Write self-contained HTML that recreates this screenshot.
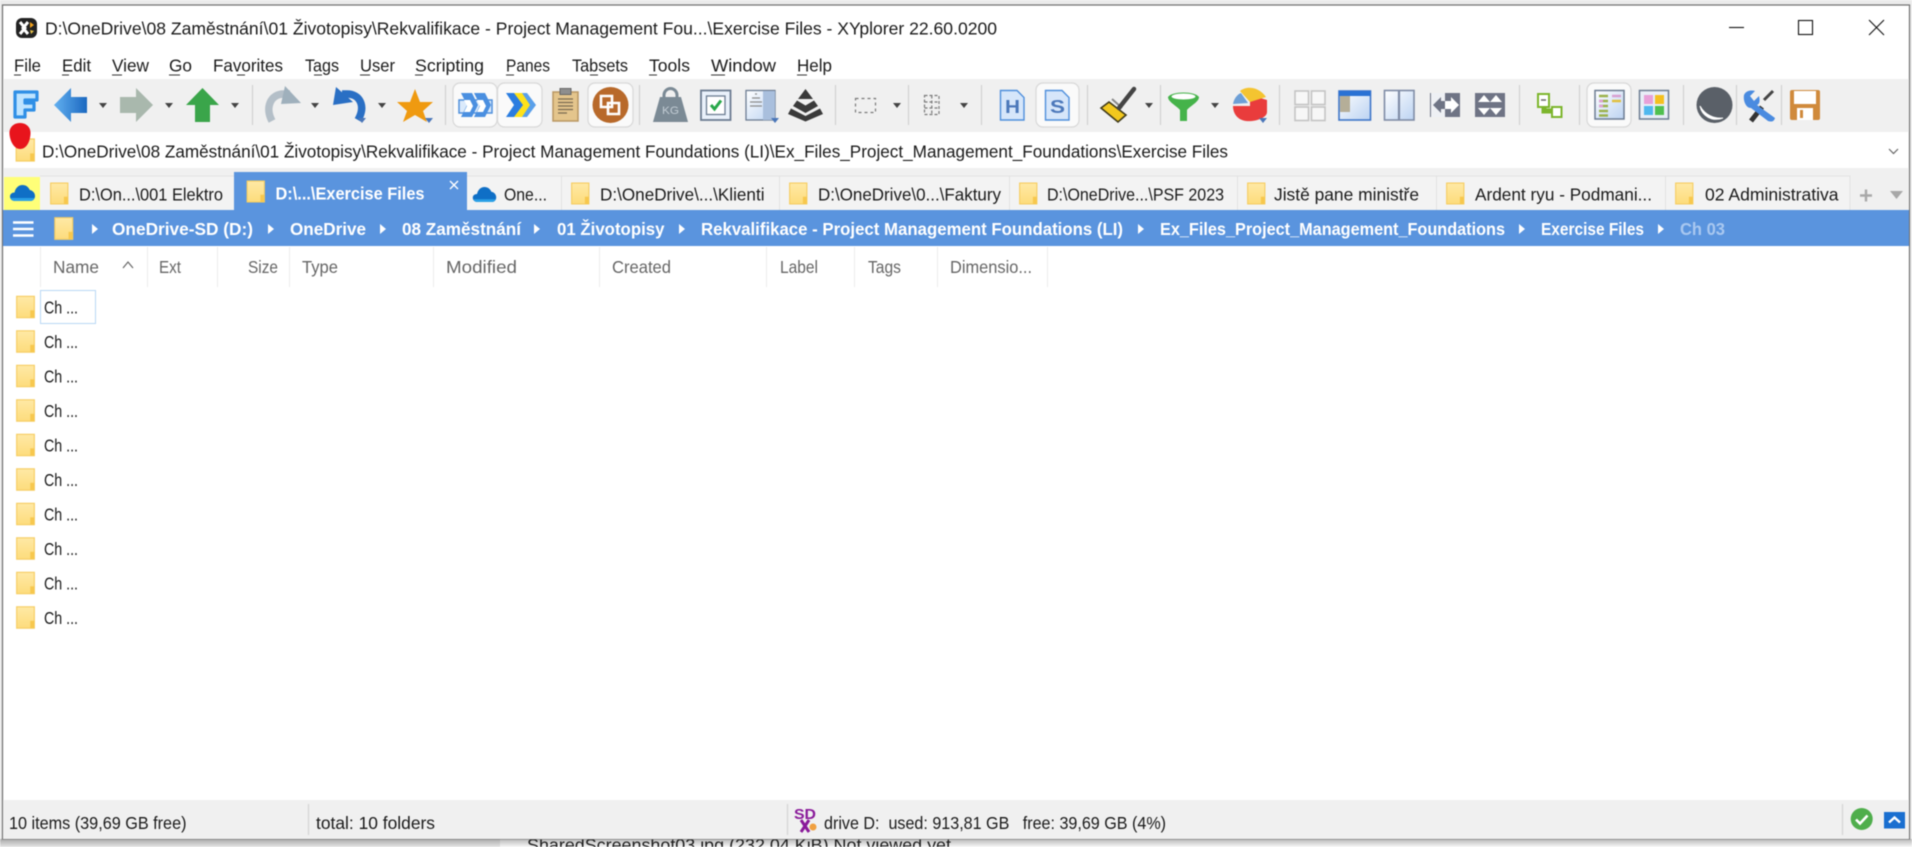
<!DOCTYPE html>
<html>
<head>
<meta charset="utf-8">
<title>XYplorer</title>
<style>
html,body{margin:0;padding:0;width:1912px;height:847px;overflow:hidden;background:#fff}
svg{display:block;filter:blur(0.45px)}
text{font-family:"Liberation Sans","DejaVu Sans",sans-serif;font-size:17.5px;fill:#1a1a1a}
.h{fill:#666}
.b{font-weight:bold;fill:#fff;font-size:17.5px}
</style>
</head>
<body>
<svg width="1912" height="847" viewBox="0 0 1912 847" xmlns="http://www.w3.org/2000/svg">
<defs>
<linearGradient id="fg" x1="0" y1="0" x2="0" y2="1"><stop offset="0" stop-color="#ffe9a6"/><stop offset="1" stop-color="#fddc7c"/></linearGradient>
<linearGradient id="sh" x1="0" y1="0" x2="0" y2="1"><stop offset="0" stop-color="#000" stop-opacity=".28"/><stop offset="1" stop-color="#000" stop-opacity=".03"/></linearGradient>
<linearGradient id="blu" x1="0" y1="0" x2="1" y2="0"><stop offset="0" stop-color="#62b0f0"/><stop offset="1" stop-color="#1b68c0"/></linearGradient>
<linearGradient id="docg" x1="0" y1="0" x2="1" y2="1"><stop offset="0" stop-color="#fff"/><stop offset="1" stop-color="#bcd3f2"/></linearGradient>
<symbol id="folder" viewBox="0 0 20 24" overflow="visible">
<path d="M.7.7H19.3V23.3H.7Z" fill="url(#fg)" stroke="#f6cd62" stroke-width="1.2"/>
<path d="M15 15.5h4.3V23.3H15Z" fill="#f7c84e"/>
</symbol>
<symbol id="cloud" viewBox="0 0 25 16" overflow="visible">
<path d="M5 16C2 16 0 14 0 11.500 0 9 2 7.500 4.500 7.500 5.500 3 8.500 0 12.500 0 16 0 18.500 2 19.800 5 22.800 5.500 25 8 25 11 25 14 23 16 20 16Z" fill="#0f6fc6"/>
<path d="M5 16C2.800 16 1 14.600 .6 13H24.400C23.800 15 22 16 20 16Z" fill="#2aa0e6"/>
</symbol>
<symbol id="tri" viewBox="0 0 8 5" overflow="visible"><path d="M0 0H8L4 5Z" fill="#444"/></symbol>
<symbol id="tris" viewBox="0 0 8 5" overflow="visible"><path d="M0 0H8L4 5Z" fill="#4a76b8"/></symbol>
<symbol id="arr" viewBox="0 0 6 10" overflow="visible"><path d="M0 0L6 5L0 10Z" fill="#fff"/></symbol>
</defs>

<!-- outer -->
<rect width="1912" height="847" fill="#ebebeb"/>
<rect x="500" y="839" width="1412" height="8" fill="#fff"/>
<text x="527" y="851" textLength="424" lengthAdjust="spacingAndGlyphs" style="fill:#222">SharedScreenshot03.jpg (232.04 KiB) Not viewed yet</text>
<rect x="0" y="839" width="1912" height="8" fill="url(#sh)"/>
<!-- window -->
<rect x="2.500" y="5" width="1907" height="834" fill="#fff" stroke="#6f6f6f" stroke-width="1.200"/>
<rect x="3" y="79" width="1906" height="53" fill="#f0f0f0"/>
<rect x="3" y="168" width="1906" height="42" fill="#f0f0f0"/>
<rect x="3" y="800" width="1906" height="39" fill="#f0f0f0"/>

<!-- title -->
<g>
<rect x="16" y="18" width="21" height="20" rx="6" fill="#222"/>
<path d="M20 22l5 6-5 6M28 22l-5 6 5 6" stroke="#fff" stroke-width="3" fill="none"/>
<path d="M30 22l4 3-4 3z" fill="#f2a21c"/>
<path d="M30 30l4 1-3 3z" fill="#e7c24a"/>
</g>
<text x="45" y="34.500" textLength="952" lengthAdjust="spacingAndGlyphs">D:\OneDrive\08 Zaměstnání\01 Životopisy\Rekvalifikace - Project Management Fou...\Exercise Files - XYplorer 22.60.0200</text>
<path d="M1729 27.500H1744" stroke="#111" stroke-width="1.100"/>
<rect x="1798.500" y="20.500" width="14" height="14" fill="none" stroke="#111" stroke-width="1.100"/>
<path d="M1869 20L1884 35M1884 20L1869 35" stroke="#111" stroke-width="1.100"/>

<!-- menu -->
<g>
<text x="14" y="71.500" textLength="27" lengthAdjust="spacingAndGlyphs">File</text>
<text x="62" y="71.500" textLength="29" lengthAdjust="spacingAndGlyphs">Edit</text>
<text x="112" y="71.500" textLength="37" lengthAdjust="spacingAndGlyphs">View</text>
<text x="169" y="71.500" textLength="23" lengthAdjust="spacingAndGlyphs">Go</text>
<text x="213" y="71.500" textLength="70" lengthAdjust="spacingAndGlyphs">Favorites</text>
<text x="305" y="71.500" textLength="34" lengthAdjust="spacingAndGlyphs">Tags</text>
<text x="360" y="71.500" textLength="35" lengthAdjust="spacingAndGlyphs">User</text>
<text x="415" y="71.500" textLength="69" lengthAdjust="spacingAndGlyphs">Scripting</text>
<text x="506" y="71.500" textLength="44" lengthAdjust="spacingAndGlyphs">Panes</text>
<text x="572" y="71.500" textLength="56" lengthAdjust="spacingAndGlyphs">Tabsets</text>
<text x="649" y="71.500" textLength="41" lengthAdjust="spacingAndGlyphs">Tools</text>
<text x="711" y="71.500" textLength="65" lengthAdjust="spacingAndGlyphs">Window</text>
<text x="797" y="71.500" textLength="35" lengthAdjust="spacingAndGlyphs">Help</text>
<path d="M14 75h7M62 75h7M112 75h10M169 75h11M237 75h8M314 75h8M360 75h10M415 75h8M506 75h8M590 75h8M649 75h8M711 75h14M797 75h10" stroke="#333" stroke-width="1"/>
</g>

<!-- toolbar separators -->
<path d="M252.500 85V125M445.500 85V125M639.500 85V125M835.500 85V125M908.500 85V125M981.500 85V125M1087.500 85V125M1160.500 85V125M1279.500 85V125M1519.500 85V125M1579.500 85V125M1683.500 85V125M1736.500 85V125M1781.500 85V125" stroke="#d2d2d2" stroke-width="1.200"/>

<!-- button backgrounds -->
<g fill="#fafafa" stroke="#d8d8d8" stroke-width="1.200">
<rect x="453" y="83" width="44" height="44" rx="7"/>
<rect x="497.500" y="83" width="44.500" height="44" rx="7"/>
<rect x="588" y="83" width="45" height="44" rx="7"/>
<rect x="1036" y="83" width="43" height="44" rx="7"/>
<rect x="1587" y="83" width="44" height="44" rx="7"/>
</g>

<!-- F -->
<path d="M15 92H37V100H25V103H34V110H25V117H15Z" fill="#bfe4ff" stroke="#2f8fe6" stroke-width="3.200" stroke-linejoin="round"/>
<!-- back -->
<path d="M54 105L71 88V97H87V113H71V122Z" fill="url(#blu)"/>
<!-- forward -->
<path d="M153 105L136 88V97H120V113H136V122Z" fill="#a9b8ad"/>
<!-- up -->
<path d="M202.500 88L219 105H210V122H195V105H186Z" fill="#3aa54a"/>
<!-- dropdowns -->
<use href="#tri" x="99" y="103" width="8" height="5"/>
<use href="#tri" x="165" y="103" width="8" height="5"/>
<use href="#tri" x="231" y="103" width="8" height="5"/>
<use href="#tri" x="311" y="103" width="8" height="5"/>
<use href="#tri" x="378" y="103" width="8" height="5"/>
<use href="#tri" x="893" y="103" width="8" height="5"/>
<use href="#tri" x="960" y="103" width="8" height="5"/>
<use href="#tri" x="1145" y="103" width="8" height="5"/>
<use href="#tri" x="1211" y="103" width="8" height="5"/>
<!-- redo -->
<path d="M272 121C265 108 270 94 284 94H290" fill="none" stroke="#b4bfc8" stroke-width="7.500"/>
<path d="M285 86L301 103L281 104Z" fill="#9fb0bc"/>
<!-- undo -->
<path d="M358 120C366 106 360 94 347 94H342" fill="none" stroke="#2a6fc4" stroke-width="7.500"/>
<path d="M333 105L336 87L353 102Z" fill="#2a6fc4"/>
<use href="#tris" x="358" y="118" width="8" height="5"/>
<!-- star -->
<path d="M415 89L420 102L433 102L423 111L427 122L415 115L403 122L407 111L397 102L410 102Z" fill="#ef9a10"/>
<use href="#tris" x="425" y="118" width="8" height="5"/>

<!-- chevrons 1 -->
<g>
<rect x="459" y="100" width="33" height="13" fill="#dbeafb" stroke="#4f8fdc" stroke-width="1.500"/>
<path d="M461 93H472L478 105L472 117H461L467 105Z" fill="#4a8fe0"/>
<path d="M474 93H485L491 105L485 117H474L480 105Z" fill="#4a8fe0"/>
<path d="M464 100H470L473 106L470 112H464L467 106Z" fill="#fff"/>
<path d="M477 100H483L486 106L483 112H477L480 106Z" fill="#fff"/>
</g>
<!-- chevrons 2 -->
<g>
<path d="M506 93H516L527 105L516 117H506L514 105Z" fill="#2b7de0"/>
<path d="M514 93H522L531 105L522 117H514L523 105Z" fill="#ffe21a"/>
<path d="M522 93H527L536 105L527 117H522L530 105Z" fill="#5aa0ea"/>
</g>
<!-- clipboard -->
<rect x="553" y="92" width="25" height="29" fill="#e4c58c" stroke="#b99763" stroke-width="1.500"/>
<rect x="560" y="88.500" width="11" height="6" fill="#8e8e8e" stroke="#666"/>
<path d="M558 99H573M558 102.500H573M558 106H573M558 109.500H573M558 113H567" stroke="#7a6a50" stroke-width="1.200"/>
<!-- circle -->
<circle cx="610.500" cy="105" r="18" fill="#b8692a"/>
<path d="M601 96h11v11h-11z M608 103h11v11h-11z" fill="none" stroke="#fff" stroke-width="2.600"/>
<!-- weight -->
<path d="M664 97V95a6.500 6.500 0 0 1 13 0V97" fill="none" stroke="#7b8a95" stroke-width="3"/>
<path d="M660 97H681L688 122H653Z" fill="#7b8a95"/>
<text x="662" y="114" textLength="17" lengthAdjust="spacingAndGlyphs" style="font-size:11px;fill:#c2ccd4">KG</text>
<!-- checkbox -->
<rect x="701" y="90.500" width="29.500" height="29.500" fill="#e9f1fb" stroke="#6c7c92" stroke-width="1.800"/>
<rect x="706.500" y="96" width="18.500" height="18.500" fill="#fff" stroke="#6c7c92" stroke-width="1.300"/>
<path d="M711 105L714.500 109L721 100.500" fill="none" stroke="#28a84a" stroke-width="3"/>
<!-- doc list -->
<rect x="746" y="90.500" width="29" height="29.500" fill="url(#docg)" stroke="#6c7c92" stroke-width="1.300"/>
<rect x="763" y="91" width="12" height="29" fill="#a9bfdd"/>
<path d="M755 94H757M752 98H760M750 102H762M750 106H762" stroke="#8b8b8b" stroke-width="1.300"/>
<use href="#tris" x="771" y="118" width="8" height="5"/>
<!-- stack -->
<path d="M805.500 89L813 99H798Z M797 100.500L805.500 105.500L814 100.500L818 106L805.500 113L793 106Z M791 108.500L805.500 116L820 108.500L823 114L805.500 121.500L788 114Z" fill="#3a3a3a"/>
<!-- dashed box -->
<rect x="855.500" y="98.500" width="20" height="14" fill="none" stroke="#7a7a7a" stroke-width="1.200" stroke-dasharray="3 3"/>
<!-- dashed cols -->
<path d="M924.500 95.500H939V114.500H924.500ZM924.500 102H939M924.500 108H939M931.800 95.500V114.500" fill="none" stroke="#7a7a7a" stroke-width="1.200" stroke-dasharray="3 2"/>
<!-- H doc -->
<path d="M1000.500 90.500H1017L1024 97.500V120H1000.500Z" fill="#d6e6fa" stroke="#4f8fdc" stroke-width="1.400"/>
<text x="1005" y="113" textLength="15" lengthAdjust="spacingAndGlyphs" style="font-size:18px;font-weight:bold;fill:#4c78ba">H</text>
<!-- S doc -->
<path d="M1045.500 90.500H1062L1069 97.500V120H1045.500Z" fill="#d6e6fa" stroke="#4f8fdc" stroke-width="1.400"/>
<text x="1050" y="113" textLength="15" lengthAdjust="spacingAndGlyphs" style="font-size:18px;font-weight:bold;fill:#4c78ba">S</text>
<!-- brush -->
<path d="M1101 108L1109 102L1126 115L1118 122Z" fill="#f2c81e" stroke="#3f3a1a" stroke-width="1.600"/>
<path d="M1112 99L1122 108" stroke="#888" stroke-width="2"/>
<path d="M1119 108L1134 89" stroke="#444" stroke-width="4.500" stroke-linecap="round"/>
<!-- funnel -->
<path d="M1168 97C1172 91 1195 91 1199 97C1199 102 1190 106 1187 110V121H1180V110C1177 106 1168 102 1168 97Z" fill="#45b34a"/>
<ellipse cx="1183.500" cy="96.500" rx="12" ry="3" fill="#fff"/>
<!-- pie -->
<path d="M1250 95L1267 100V112C1267 118 1255 122 1246 121C1238 120 1233 114 1233 106L1250 106Z" fill="#e93c3c"/>
<path d="M1233 104C1234 98 1238 94 1241 93L1248 103Z" fill="#6d9fd6"/>
<path d="M1240 91C1246 86 1258 86 1266 97L1250 102Z" fill="#f4c430"/>
<use href="#tris" x="1259" y="118" width="8" height="5"/>
<!-- grid -->
<g fill="#f7f7f7" stroke="#c4c4c4" stroke-width="1.600">
<rect x="1295" y="91" width="13.500" height="13.500"/>
<rect x="1311.500" y="91" width="13.500" height="13.500"/>
<rect x="1295" y="107" width="13.500" height="13.500"/>
<rect x="1311.500" y="107" width="13.500" height="13.500"/>
</g>
<!-- window icon -->
<rect x="1339" y="91" width="31.500" height="29" fill="url(#docg)" stroke="#3f76c8" stroke-width="1.600"/>
<rect x="1339" y="91" width="31.500" height="5" fill="#2a72d4"/>
<rect x="1340" y="96" width="10" height="16" fill="#b5ae98"/>
<!-- 2 col -->
<rect x="1384.500" y="90.500" width="29.500" height="29.500" fill="url(#docg)" stroke="#7f8ca6" stroke-width="1.600"/>
<path d="M1399 90.500V120" stroke="#7f8ca6" stroke-width="2.200"/>
<!-- swap h -->
<rect x="1430" y="93" width="30" height="24" fill="#6f7485"/>
<path d="M1431 93H1445V117H1431Z" fill="#eef0f4"/>
<path d="M1433 105L1441 97V101H1446V109H1441V113Z" fill="#6f7485"/>
<path d="M1459 105L1451 97V101H1445V109H1451V113Z" fill="#fff"/>
<!-- swap v -->
<rect x="1475" y="93" width="30" height="24" fill="#6f7485"/>
<path d="M1484 95L1490 102H1478ZM1484 115L1490 108H1478ZM1496 95L1502 102H1490ZM1496 115L1502 108H1490Z" fill="#fff"/>
<!-- tree -->
<path d="M1544 108V111H1552" stroke="#7cb52c" stroke-width="5" fill="none"/>
<rect x="1538" y="94" width="11" height="13" fill="#fff" stroke="#7cb52c" stroke-width="2"/>
<path d="M1541 100h5" stroke="#666" stroke-width="1.500"/>
<rect x="1552" y="107" width="9.500" height="10" fill="#fff" stroke="#7cb52c" stroke-width="2"/>
<!-- view icon 1 -->
<rect x="1595" y="90.500" width="29" height="28.500" fill="url(#docg)" stroke="#6c7c92" stroke-width="1.500"/>
<path d="M1599 96h9M1599 101h9M1599 106h9M1599 111h9M1599 115.500h9" stroke="#9cb24c" stroke-width="2.500"/>
<path d="M1599 101h4M1599 106h4" stroke="#e0a0d8" stroke-width="2.500"/>
<path d="M1612 96h9" stroke="#d8a0d0" stroke-width="2.500"/>
<path d="M1612 101h9" stroke="#e0c040" stroke-width="2.500"/>
<!-- view icon 2 -->
<rect x="1639.500" y="90.500" width="29" height="28.500" fill="#e8eef7" stroke="#6c7c92" stroke-width="1.500"/>
<rect x="1644" y="95" width="9" height="9" fill="#e8a0d8"/>
<rect x="1655" y="95" width="9" height="9" fill="#f4c020"/>
<rect x="1644" y="106" width="9" height="9" fill="#50b8ee"/>
<rect x="1655" y="106" width="9" height="9" fill="#50c050"/>
<!-- moon -->
<circle cx="1714.500" cy="105" r="18" fill="#5a6068"/>
<path d="M1700 106C1702 116 1712 122 1723 118C1714 119 1705 115 1700 106Z" fill="#fff" stroke="#fff" stroke-width="1"/>
<!-- tools -->
<path d="M1762 107L1751 121" stroke="#333" stroke-width="5"/>
<path d="M1764 100L1773 91" stroke="#444" stroke-width="3"/>
<path d="M1744 95C1746 90 1752 90 1755 91L1750 96L1754 101L1759 96C1760 100 1760 104 1757 105L1775 118C1774 122 1771 122 1768 121L1751 108C1746 108 1743 101 1744 95Z" fill="#4a8be0"/>
<!-- save -->
<path d="M1792 90H1818A2 2 0 0 1 1820 92V118A2 2 0 0 1 1818 120H1792A2 2 0 0 1 1790 118V92A2 2 0 0 1 1792 90Z" fill="#d08a3c"/>
<rect x="1794" y="91" width="22" height="13" fill="#fff"/>
<rect x="1797" y="108" width="16" height="12" fill="#fff"/>
<rect x="1800" y="110" width="3" height="8" fill="#d08a3c"/>

<!-- address -->
<use href="#folder" x="15.500" y="138" width="19.500" height="24"/>
<text x="42" y="157.500" textLength="1186" lengthAdjust="spacingAndGlyphs">D:\OneDrive\08 Zaměstnání\01 Životopisy\Rekvalifikace - Project Management Foundations (LI)\Ex_Files_Project_Management_Foundations\Exercise Files</text>
<path d="M1889 149L1893.500 153.500L1898 149" fill="none" stroke="#666" stroke-width="1.200"/>
<!-- red blob -->
<path d="M20 123C27 123 31 128 30.500 134C30 141 27 149 20 149C14 149 10 141 9.500 134C9 128 13 123 20 123Z" fill="#e8141c"/>

<!-- tabs -->
<rect x="40" y="175.500" width="1810" height="35" fill="#f3f3f3"/>
<path d="M234 176H40M467 176H1850V210M561.500 176V210M779.500 176V210M1009.500 176V210M1237.500 176V210M1436.500 176V210M1665.500 176V210" stroke="#e2e2e2" fill="none"/>
<rect x="4" y="177" width="36" height="33" fill="#ffff78"/>
<use href="#cloud" x="10" y="185" width="25" height="16"/>
<use href="#folder" x="50" y="182" width="18.500" height="23"/>
<text x="79" y="200.500" textLength="144" lengthAdjust="spacingAndGlyphs">D:\On...\001 Elektro</text>
<rect x="234" y="172" width="233" height="38" fill="#5a94de"/>
<use href="#folder" x="246.500" y="180" width="18.500" height="23"/>
<text class="b" x="275.500" y="199.500" textLength="149" lengthAdjust="spacingAndGlyphs">D:\...\Exercise Files</text>
<path d="M450 181L458 189M458 181L450 189" stroke="#fff" stroke-width="1.400"/>
<use href="#cloud" x="472" y="187" width="25" height="15"/>
<text x="504" y="200.500" textLength="43" lengthAdjust="spacingAndGlyphs">One...</text>
<use href="#folder" x="571" y="182" width="18.500" height="23"/>
<text x="600" y="200.500" textLength="164.500" lengthAdjust="spacingAndGlyphs">D:\OneDrive\...\Klienti</text>
<use href="#folder" x="789" y="182" width="18.500" height="23"/>
<text x="818" y="200.500" textLength="183" lengthAdjust="spacingAndGlyphs">D:\OneDrive\0...\Faktury</text>
<use href="#folder" x="1019" y="182" width="18.500" height="23"/>
<text x="1047" y="200.500" textLength="177" lengthAdjust="spacingAndGlyphs">D:\OneDrive...\PSF 2023</text>
<use href="#folder" x="1247" y="182" width="18.500" height="23"/>
<text x="1274" y="200.500" textLength="145" lengthAdjust="spacingAndGlyphs">Jistě pane ministře</text>
<use href="#folder" x="1446" y="182" width="18.500" height="23"/>
<text x="1475" y="200.500" textLength="177" lengthAdjust="spacingAndGlyphs">Ardent ryu - Podmani...</text>
<use href="#folder" x="1675" y="182" width="18.500" height="23"/>
<text x="1705" y="200.500" textLength="133.500" lengthAdjust="spacingAndGlyphs">02 Administrativa</text>
<path d="M1860 195.500H1872M1866 189.500V201.500" stroke="#a8a8a8" stroke-width="2.400"/>
<path d="M1890 191H1903L1896.500 199Z" fill="#a8a8a8"/>

<!-- breadcrumb band -->
<rect x="3" y="210" width="1906" height="36" fill="#5a94de"/>
<path d="M13 222.500H33.500M13 229H33.500M13 235.500H33.500" stroke="#fff" stroke-width="2.500"/>
<use href="#folder" x="54" y="217" width="19.500" height="23"/>
<use href="#arr" x="92" y="224" width="6" height="10"/>
<text class="b" x="112" y="235" textLength="141" lengthAdjust="spacingAndGlyphs">OneDrive-SD (D:)</text>
<use href="#arr" x="268" y="224" width="6" height="10"/>
<text class="b" x="290" y="235" textLength="76" lengthAdjust="spacingAndGlyphs">OneDrive</text>
<use href="#arr" x="380" y="224" width="6" height="10"/>
<text class="b" x="402" y="235" textLength="119" lengthAdjust="spacingAndGlyphs">08 Zaměstnání</text>
<use href="#arr" x="534" y="224" width="6" height="10"/>
<text class="b" x="557" y="235" textLength="107.500" lengthAdjust="spacingAndGlyphs">01 Životopisy</text>
<use href="#arr" x="679" y="224" width="6" height="10"/>
<text class="b" x="701" y="235" textLength="422" lengthAdjust="spacingAndGlyphs">Rekvalifikace - Project Management Foundations (LI)</text>
<use href="#arr" x="1138" y="224" width="6" height="10"/>
<text class="b" x="1160" y="235" textLength="345" lengthAdjust="spacingAndGlyphs">Ex_Files_Project_Management_Foundations</text>
<use href="#arr" x="1519" y="224" width="6" height="10"/>
<text class="b" x="1541" y="235" textLength="103" lengthAdjust="spacingAndGlyphs">Exercise Files</text>
<use href="#arr" x="1658" y="224" width="6" height="10"/>
<text class="b" x="1680" y="235" textLength="45" lengthAdjust="spacingAndGlyphs" style="fill:#a9c8f0">Ch 03</text>

<!-- column header -->
<path d="M40.500 247V287M147.500 247V287M217.500 247V287M289.500 247V287M433.500 247V287M599.500 247V287M766.500 247V287M854.500 247V287M937.500 247V287M1047.500 247V287" stroke="#ececec"/>
<text class="h" x="53" y="273" textLength="46" lengthAdjust="spacingAndGlyphs">Name</text>
<path d="M123 268L128 262L133 268" fill="none" stroke="#666" stroke-width="1.200"/>
<text class="h" x="159" y="273" textLength="22" lengthAdjust="spacingAndGlyphs">Ext</text>
<text class="h" x="248" y="273" textLength="30" lengthAdjust="spacingAndGlyphs">Size</text>
<text class="h" x="302" y="273" textLength="36" lengthAdjust="spacingAndGlyphs">Type</text>
<text class="h" x="446" y="273" textLength="71" lengthAdjust="spacingAndGlyphs">Modified</text>
<text class="h" x="612" y="273" textLength="59" lengthAdjust="spacingAndGlyphs">Created</text>
<text class="h" x="780" y="273" textLength="38" lengthAdjust="spacingAndGlyphs">Label</text>
<text class="h" x="868" y="273" textLength="33" lengthAdjust="spacingAndGlyphs">Tags</text>
<text class="h" x="950" y="273" textLength="82" lengthAdjust="spacingAndGlyphs">Dimensio...</text>

<!-- rows -->
<rect x="40.500" y="290.500" width="55" height="33" fill="#fff" stroke="#b8d8f4" stroke-width="1"/>
<use href="#folder" x="16" y="295" width="19" height="24"/>
<text x="44" y="313.500" textLength="34" lengthAdjust="spacingAndGlyphs">Ch ...</text>
<use href="#folder" x="16" y="329.500" width="19" height="24"/>
<text x="44" y="348" textLength="34" lengthAdjust="spacingAndGlyphs">Ch ...</text>
<use href="#folder" x="16" y="364" width="19" height="24"/>
<text x="44" y="382.500" textLength="34" lengthAdjust="spacingAndGlyphs">Ch ...</text>
<use href="#folder" x="16" y="398.500" width="19" height="24"/>
<text x="44" y="417" textLength="34" lengthAdjust="spacingAndGlyphs">Ch ...</text>
<use href="#folder" x="16" y="433" width="19" height="24"/>
<text x="44" y="451.500" textLength="34" lengthAdjust="spacingAndGlyphs">Ch ...</text>
<use href="#folder" x="16" y="467.500" width="19" height="24"/>
<text x="44" y="486" textLength="34" lengthAdjust="spacingAndGlyphs">Ch ...</text>
<use href="#folder" x="16" y="502" width="19" height="24"/>
<text x="44" y="520.500" textLength="34" lengthAdjust="spacingAndGlyphs">Ch ...</text>
<use href="#folder" x="16" y="536.500" width="19" height="24"/>
<text x="44" y="555" textLength="34" lengthAdjust="spacingAndGlyphs">Ch ...</text>
<use href="#folder" x="16" y="571" width="19" height="24"/>
<text x="44" y="589.500" textLength="34" lengthAdjust="spacingAndGlyphs">Ch ...</text>
<use href="#folder" x="16" y="605.500" width="19" height="24"/>
<text x="44" y="624" textLength="34" lengthAdjust="spacingAndGlyphs">Ch ...</text>

<!-- status bar -->
<text x="9" y="829" textLength="177.500" lengthAdjust="spacingAndGlyphs">10 items (39,69 GB free)</text>
<path d="M308.500 804V835M787.500 804V835M1842.500 804V835" stroke="#d4d4d4" stroke-width="1.200"/>
<text x="316" y="829" textLength="119" lengthAdjust="spacingAndGlyphs">total: 10 folders</text>
<text x="794" y="819" textLength="22" lengthAdjust="spacingAndGlyphs" style="font-size:15px;font-weight:bold;fill:#8a1a9a">SD</text>
<path d="M801 820L809 832M809 820L801 832" stroke="#8a1a9a" stroke-width="3"/>
<circle cx="813" cy="827" r="3.500" fill="#f0a040"/>
<text x="824" y="829" textLength="342" lengthAdjust="spacingAndGlyphs" xml:space="preserve">drive D:  used: 913,81 GB   free: 39,69 GB (4%)</text>
<circle cx="1861.700" cy="819" r="11" fill="#4fae4c"/>
<path d="M1856 819.500L1860 823.500L1867.500 815.500" fill="none" stroke="#fff" stroke-width="2.600"/>
<rect x="1884" y="812" width="21" height="16.500" fill="#1a6fd0"/>
<path d="M1889 822.500L1894.500 817.500L1900 822.500" fill="none" stroke="#fff" stroke-width="2.400"/>
</svg>
</body>
</html>
